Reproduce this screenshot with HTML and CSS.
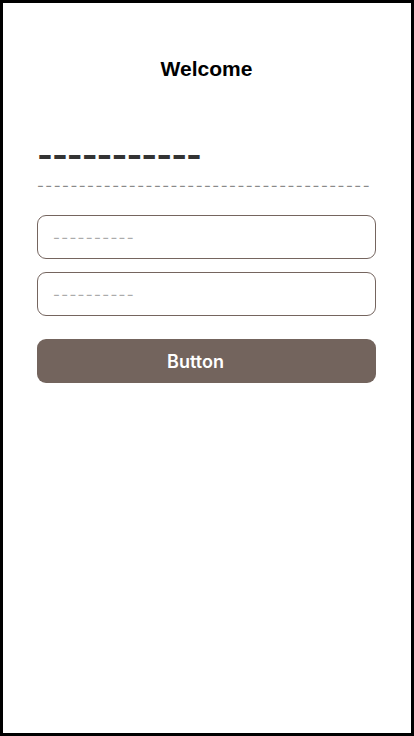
FILE: index.html
```html
<!DOCTYPE html>
<html lang="en">
<head>
  <meta charset="UTF-8">
  <title>Welcome</title>
  <link rel="stylesheet" href="styles.css">
</head>
<body>
  <div class="frame">
    <h1 class="title">Welcome</h1>
    <div class="intro">
      <p class="heading">-----------</p>
      <p class="subtext">----------------------------------------</p>
    </div>
    <form class="login-form" action="#">
      <input class="field" type="text" placeholder="----------">
      <input class="field" type="password" placeholder="----------">
      <button class="submit" type="submit">Button</button>
    </form>
  </div>
</body>
</html>
```

FILE: styles.css
```css
* {
  box-sizing: border-box;
  margin: 0;
  padding: 0;
}

body {
  background-color: #ffffff;
  font-family: Inter, "Noto Sans", sans-serif;
}

.frame {
  width: 414px;
  height: 736px;
  border: 3px solid #000000;
  padding: 0 35px 0 34px;
}

.title {
  padding-top: 54px;
  font-family: "Liberation Sans", Arial, sans-serif;
  font-size: 21px;
  line-height: 24px;
  font-weight: bold;
  text-align: center;
  color: #000000;
}

.intro {
  margin-top: 54px;
}

.heading {
  font-size: 34px;
  line-height: 40px;
  font-weight: bold;
  color: #333333;
  letter-spacing: -1px;
  white-space: nowrap;
}

.subtext {
  margin-top: 2px;
  font-size: 15px;
  line-height: 18px;
  color: #8a8a8a;
  letter-spacing: 1.45px;
  white-space: nowrap;
  overflow: hidden;
}

.login-form {
  display: flex;
  flex-direction: column;
  gap: 13px;
  margin-top: 20px;
}

.field {
  display: block;
  width: 100%;
  height: 44px;
  border: 1px solid #75655f;
  border-radius: 9px;
  padding: 0 15px;
  font-family: Inter, sans-serif;
  font-size: 15px;
  letter-spacing: 1.3px;
  outline: none;
}

.field::placeholder {
  color: #ababab;
}

.submit {
  height: 44px;
  margin-top: 10px;
  padding-right: 22px;
  border: none;
  border-radius: 9px;
  background-color: #73645d;
  color: #ffffff;
  font-family: Inter, sans-serif;
  font-size: 18px;
  font-weight: 600;
  cursor: pointer;
}
```
